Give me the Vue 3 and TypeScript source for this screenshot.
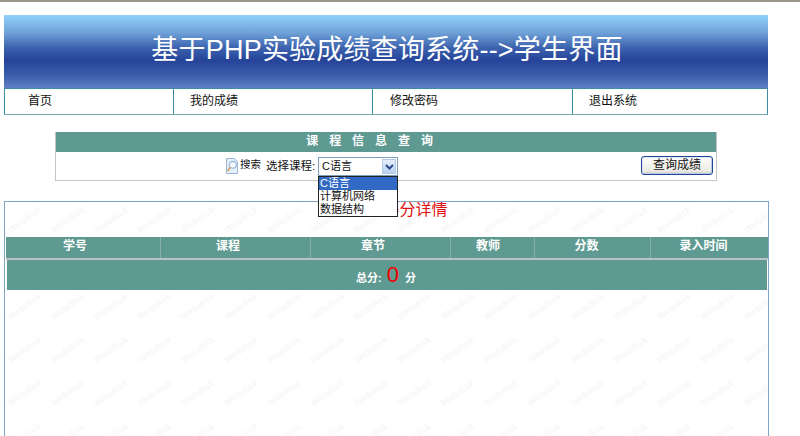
<script setup lang="ts">
const navItems: string[] = ['首页', '我的成绩', '修改密码', '退出系统']
const columns: string[] = ['学号', '课程', '章节', '教师', '分数', '录入时间']
const options: string[] = ['C语言', '计算机网络', '数据结构']
</script>

<template>
  <div class="page">
    <div class="topline"></div>
    <header class="banner">基于PHP实验成绩查询系统--&gt;学生界面</header>
    <nav class="nav">
      <a v-for="item in navItems" :key="item" class="nav-item">{{ item }}</a>
    </nav>

    <section class="query">
      <h2 class="query-title">课 程 信 息 查 询</h2>
      <div class="query-body">
        <svg class="search-icon" width="12" height="16" viewBox="0 0 12 16">
          <path d="M.5.5h8l3 3v12H.5z" fill="#e6effa" stroke="#9db4d2" />
          <circle cx="6.8" cy="6.8" r="3.4" fill="#f7fafe" stroke="#94b0d8" stroke-width="1.1" />
          <path d="M4.4 9.4 1.6 13" stroke="#d0a06e" stroke-width="1.8" />
        </svg>
        <span class="search-label">搜索</span>
        <label class="select-label">选择课程:</label>
        <div class="select">
          <span class="select-value">C语言</span>
          <span class="select-arrow">
            <svg width="9" height="6" viewBox="0 0 9 6">
              <path d="M1 1l3.5 3.5L8 1" fill="none" stroke="#2b4c86" stroke-width="2" />
            </svg>
          </span>
          <ul class="select-list">
            <li v-for="(opt, i) in options" :key="opt" :class="{ active: i === 0 }">{{ opt }}</li>
          </ul>
        </div>
        <button class="submit" type="button">查询成绩</button>
      </div>
    </section>

    <section class="result">
      <svg class="watermarks" aria-hidden="true" width="100%" height="100%">
        <defs>
          <pattern id="webdisk" width="43.3" height="43.3" patternUnits="userSpaceOnUse" patternTransform="translate(-2 -3.5)">
            <text x="21.65" y="24.5" text-anchor="middle" transform="rotate(-35 21.65 21.65)" class="mark">Webdisk</text>
          </pattern>
        </defs>
        <rect width="100%" height="100%" fill="url(#webdisk)" />
      </svg>
      <h3 class="result-title">学生成绩得分详情</h3>
      <div class="table">
        <div class="thead">
          <div v-for="col in columns" :key="col" class="th">{{ col }}</div>
        </div>
        <div class="total">总分:<em>0</em>分</div>
      </div>
    </section>
  </div>
</template>

<style>
html, body { margin: 0; background: #fff; overflow: hidden; }
</style>

<style scoped>
.page {
  width: 800px;
  height: 436px;
  overflow: hidden;
  font-family: "Liberation Sans", "Noto Sans CJK SC", sans-serif;
  font-size: 12px;
  color: #111;
  background: #fff;
}
.topline { height: 2px; background: #9a978a; margin-bottom: 13px; }
.banner {
  box-sizing: border-box;
  width: 764px;
  height: 73px;
  margin-left: 4px;
  padding: 18px 0 0 2px;
  text-align: center;
  font-size: 27px;
  letter-spacing: 0.2px;
  line-height: 34px;
  color: #fff;
  background: linear-gradient(#90d2fd 0%, #6fa2d8 24%, #3c62ad 45%, #25449a 62%, #3a5ca9 82%, #5f80c4 100%);
}
.nav {
  box-sizing: border-box;
  display: grid;
  grid-template-columns: 168px 199px 200px 1fr;
  width: 764px;
  height: 27px;
  margin-left: 4px;
  border: 1px solid #3f8ca5;
  border-bottom-color: #75aab4;
}
.nav-item {
  padding-left: 23px;
  line-height: 25px;
  font-size: 12px;
  border-left: 1px solid #3f8ca5;
}
.nav-item:first-child { border-left: 0; }
.nav-item:nth-child(2) { padding-left: 16px; }
.nav-item:nth-child(3) { padding-left: 17px; }
.nav-item:nth-child(4) { padding-left: 16px; }

.query {
  position: relative;
  z-index: 1;
  box-sizing: border-box;
  width: 662px;
  height: 49px;
  margin: 17px 0 0 55px;
  border: 1px solid #c4c4c4;
  border-top: 0;
}
.query-title {
  margin: 0;
  height: 20px;
  padding-right: 30px;
  background: #5f9a92;
  color: #fff;
  text-align: center;
  font-size: 12px;
  font-weight: 700;
  line-height: 19px;
  letter-spacing: 2.8px;
  word-spacing: 2px;
}
.query-body {
  display: flex;
  align-items: flex-start;
  height: 28px;
  padding-left: 170px;
}
.search-icon { margin-top: 6px; flex: none; }
.search-label { margin: 4px 0 0 2px; font-size: 10.5px; line-height: 16px; width: 26px; }
.select-label { margin: 6px 0 0 0; font-size: 11.5px; line-height: 16px; width: 52px; white-space: nowrap; }
.select {
  position: relative;
  box-sizing: border-box;
  flex: none;
  width: 80px;
  height: 19px;
  margin-top: 5px;
  border: 1px solid #7f9db9;
  background: #fff;
  font-size: 11px;
  line-height: 16px;
}
.select-value { padding-left: 3px; }
.select-arrow {
  position: absolute;
  top: 1px;
  right: 1px;
  bottom: 1px;
  width: 14px;
  display: flex;
  align-items: center;
  justify-content: center;
  border: 1px solid #b4c8e8;
  box-sizing: border-box;
  background: linear-gradient(#e4edfb, #bcd0f2);
}
.select-list {
  position: absolute;
  top: 18px;
  left: -1px;
  z-index: 2;
  box-sizing: border-box;
  width: 80px;
  height: 41px;
  margin: 0;
  padding: 0;
  list-style: none;
  background: #fff;
  border: 1px solid #222;
  font-size: 11px;
  line-height: 13px;
}
.select-list li { height: 13px; padding-left: 1px; white-space: nowrap; }
.select-list li.active { background: #316ac5; color: #fff; }
.submit {
  flex: none;
  box-sizing: border-box;
  width: 72px;
  height: 19px;
  margin: 4px 3px 0 auto;
  padding: 0;
  border: 1px solid #20459a;
  border-radius: 3px;
  background: linear-gradient(#ffffff, #ecebe4 80%, #d6d0c5);
  box-shadow: inset -1px -1px 0 #b8c8e6, inset 1px 1px 0 #dfe7f5;
  font-family: inherit;
  font-size: 12px;
  line-height: 15px;
  color: #111;
}

.result {
  position: relative;
  box-sizing: border-box;
  width: 765px;
  height: 262px;
  margin: 20px 0 0 4px;
  border: 1px solid #7ea3c6;
  border-bottom: 0;
  overflow: hidden;
}
.watermarks {
  position: absolute;
  inset: 0;
}
.mark {
  font-family: "Liberation Sans", sans-serif;
  font-size: 9.5px;
  font-weight: 700;
  fill: #f6f6f6;
}
.result-title {
  position: relative;
  margin: 0;
  height: 35px;
  padding: 0 6px 0 0;
  text-align: center;
  color: #e01010;
  font-size: 16px;
  font-weight: 400;
  line-height: 16px;
}
.table { position: relative; margin: 0 0 0 1px; width: 762px; }
.thead {
  display: grid;
  grid-template-columns: 154px 150px 140px 84px 116px 1fr;
  height: 23px;
  border-bottom: 2px solid #b9c4c2;
  box-sizing: border-box;
  background: #5f9a92;
}
.th {
  text-align: center;
  color: #fff;
  font-size: 12px;
  font-weight: 700;
  line-height: 19px;
  border-left: 1px solid #86b0aa;
}
.th:first-child { border-left: 0; padding-right: 16px; }
.th:nth-child(2) { padding-right: 15px; }
.th:nth-child(3) { padding-right: 15px; }
.th:nth-child(4) { padding-right: 9px; }
.th:nth-child(5) { padding-right: 12px; }
.th:nth-child(6) { padding-right: 12px; }
.total {
  height: 30px;
  margin: 0 1px;
  background: #5f9a92;
  color: #fff;
  font-size: 11px;
  font-weight: 700;
  line-height: 35px;
  text-align: center;
  padding-right: 2px;
}
.total em {
  margin: 0 6px 0 5px;
  font-style: normal;
  font-weight: 400;
  font-size: 22px;
  line-height: 30px;
  color: #f00000;
}
</style>
